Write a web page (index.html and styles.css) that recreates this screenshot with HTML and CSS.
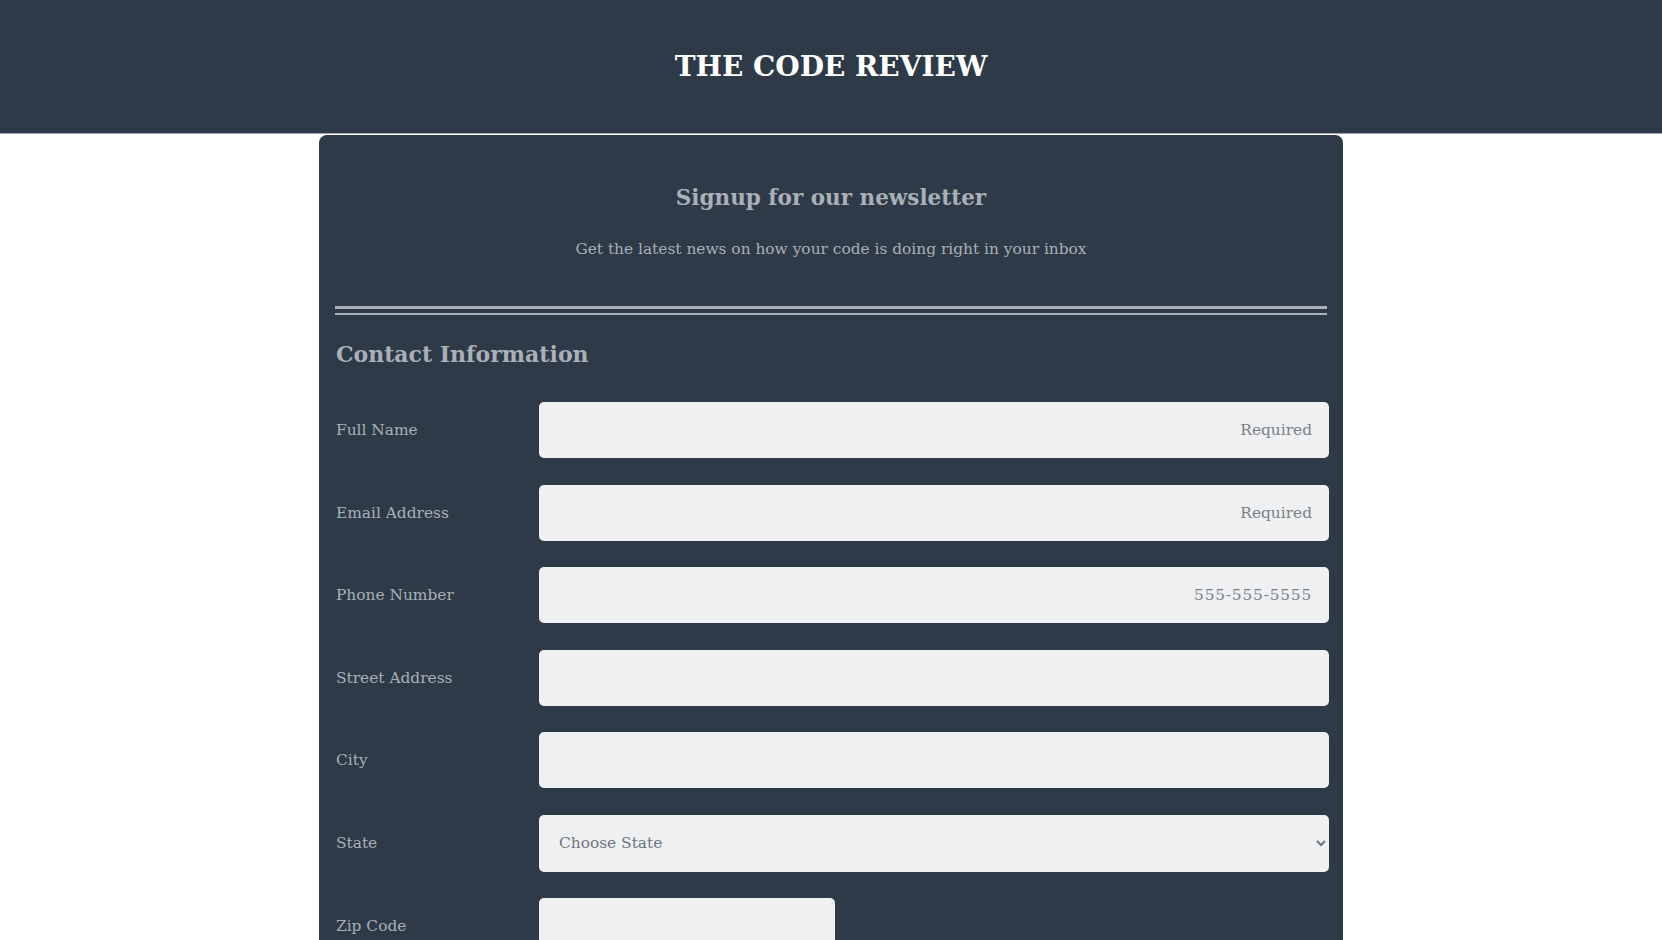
FILE: index.html
```html
<!DOCTYPE html>
<html lang="en">
<head>
<meta charset="utf-8">
<title>The Code Review</title>
<link rel="stylesheet" href="styles.css">
</head>
<body>
<header class="site-header">
  <h1 class="site-title">THE CODE REVIEW</h1>
</header>
<main class="card">
  <section class="intro">
    <h2 class="intro-title">Signup for our newsletter</h2>
    <p class="intro-text">Get the latest news on how your code is doing right in your inbox</p>
  </section>
  <div class="rule"></div>
  <form class="form">
    <h3 class="section-title">Contact Information</h3>
    <div class="fields">
      <label class="label" for="name">Full Name</label>
      <input class="input" id="name" type="text" placeholder="Required">
      <label class="label" for="email">Email Address</label>
      <input class="input" id="email" type="email" placeholder="Required">
      <label class="label" for="phone">Phone Number</label>
      <input class="input input-phone" id="phone" type="tel" placeholder="555-555-5555">
      <label class="label" for="street">Street Address</label>
      <input class="input" id="street" type="text">
      <label class="label" for="city">City</label>
      <input class="input" id="city" type="text">
      <label class="label" for="state">State</label>
      <select class="input select" id="state">
        <option>Choose State</option>
      </select>
      <label class="label" for="zip">Zip Code</label>
      <input class="input input-short" id="zip" type="text">
    </div>
  </form>
</main>
</body>
</html>
```

FILE: styles.css
```css
html, body {
  margin: 0;
  padding: 0;
  background: #ffffff;
}
body {
  font-family: "DejaVu Serif", "Liberation Serif", serif;
  height: 940px;
  overflow: hidden;
}
.site-header {
  background: #2e3a47;
  height: 133px;
  border-bottom: 1px solid #9ea6ae;
  display: flex;
  align-items: center;
  justify-content: center;
}
.site-title {
  margin: 0;
  color: #ffffff;
  font-size: 28px;
  font-weight: bold;
}
.card {
  width: 1024px;
  box-sizing: border-box;
  margin: 1px auto 0;
  background: #2e3a47;
  border-radius: 8px 8px 0 0;
  padding: 0 16px;
  min-height: 900px;
}
.intro {
  text-align: center;
  padding-top: 45px;
}
.intro-title {
  margin: 0;
  color: #a9b0b8;
  font-size: 21.5px;
  font-weight: bold;
  line-height: 36px;
}
.intro-text {
  margin: 21px 0 0;
  color: #a9b0b8;
  font-size: 15.4px;
  line-height: 24px;
}
.rule {
  margin-top: 45px;
  height: 4px;
  border-top: 3px solid #a9b0b8;
  border-bottom: 2px solid #a9b0b8;
}
.form {
  padding-top: 23px;
}
.section-title {
  margin: 0 0 0 1px;
  color: #a9b0b8;
  font-size: 22px;
  font-weight: bold;
  line-height: 32px;
}
.fields {
  margin-top: 32px;
  display: grid;
  grid-template-columns: 203px 1fr;
  row-gap: 26.5px;
  align-items: center;
  padding-left: 1px;
}
.label {
  color: #a9b0b8;
  font-size: 15.4px;
}
.input {
  box-sizing: border-box;
  height: 56px;
  width: 790px;
  border: none;
  border-radius: 5px;
  background: #eef0f2;
  font-family: inherit;
  font-size: 15.4px;
  color: #6e757c;
  padding: 0 17px;
  text-align: right;
  outline: none;
}
.input::placeholder {
  color: #7a8087;
}
.input-phone::placeholder {
  letter-spacing: 0.8px;
}
.select {
  height: 57px;
  text-align: left;
  padding: 0 16px;
  color: #6e757c;
}
.input-short {
  width: 296px;
}
```
